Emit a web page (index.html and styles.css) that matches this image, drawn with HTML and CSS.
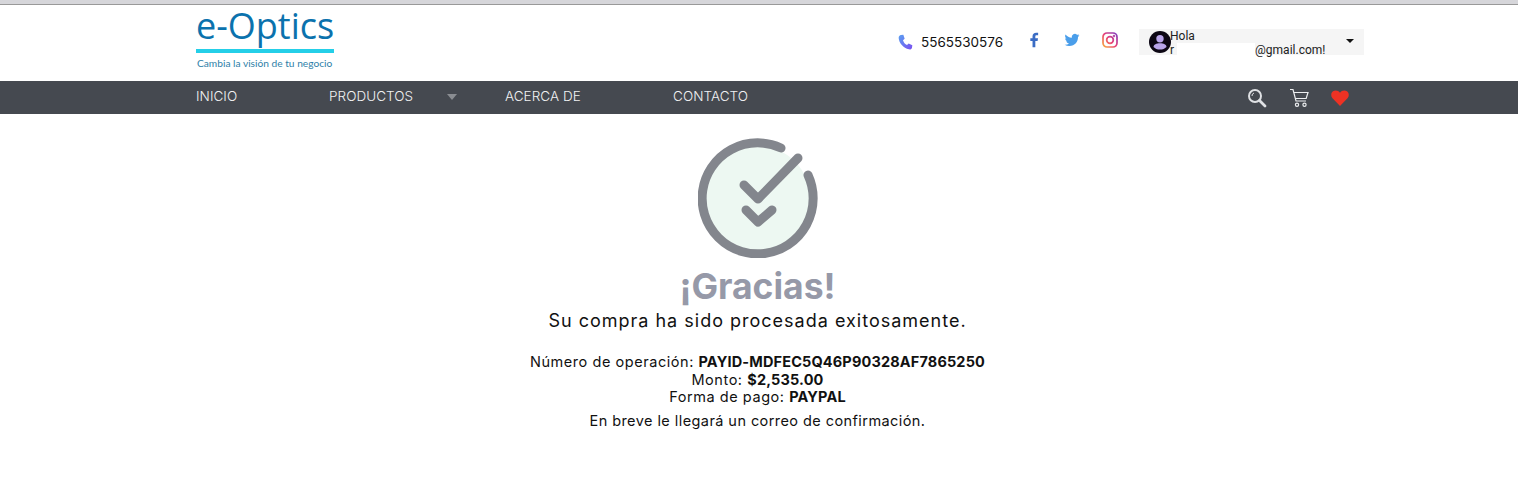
FILE: index.html
```html
<!DOCTYPE html>
<html lang="es">
<head>
  <meta charset="utf-8">
  <title>e-Optics</title>
  <link rel="stylesheet" href="styles.css">
</head>
<body>
  <div class="browser-edge"></div>

  <header class="top">
    <div class="logo">
      <div class="logo-name">e-Optics</div>
      <div class="logo-rule"></div>
      <div class="logo-tag">Cambia la visión de tu negocio</div>
    </div>
    <div class="top-right">
      <svg class="phone" width="16" height="16" viewBox="0 0 24 24">
        <defs>
          <linearGradient id="phone-grad" x1="0" y1="0" x2="1" y2="1">
            <stop offset="0" stop-color="#5aa0f0"/>
            <stop offset="1" stop-color="#7a4ff0"/>
          </linearGradient>
        </defs>
        <path fill="url(#phone-grad)" d="M6 1.5 L9.5 1 L11.5 7 L9 9.2 C10 12.5 12 15 15 16.5 L17.5 14.2 L23 17 L22.5 20.5 C22 22.5 20 23.5 18 23 C9.5 21 3 13.5 2.5 6 C2.5 3.5 4 2 6 1.5 Z"/>
      </svg>
      <span class="phone-num">5565530576</span>
      <a class="social social-fb">
        <svg width="16" height="16" viewBox="0 0 24 24"><path fill="#3a6cc4" d="M14 23V13.5h3.4l.6-4H14V7c0-1.200.5-2 2-2h2.200V1.300C17.500 1.100 16.300 1 15.300 1 12 1 9.800 3 9.800 6.500v3H6.500v4h3.300V23z"/></svg>
      </a>
      <a class="social social-tw">
        <svg width="16" height="16" viewBox="0 0 24 24"><path fill="#4a9eea" d="M23 5c-.8.4-1.700.6-2.600.8 1-.6 1.700-1.500 2-2.600-.9.500-1.900.9-2.900 1.100A4.600 4.600 0 0 0 11.700 8.500C7.900 8.300 4.500 6.500 2.300 3.700c-1.200 2.100-.6 4.700 1.400 6.100-.7 0-1.400-.2-2-.6 0 2.200 1.500 4.200 3.700 4.600-.7.200-1.400.2-2.100.1.600 1.900 2.300 3.200 4.300 3.200A9.300 9.300 0 0 1 1 19c2.100 1.300 4.500 2 7 2 8.500 0 13.300-7.200 13-13.600.9-.6 1.500-1.400 2-2.400z"/></svg>
      </a>
      <a class="social social-ig">
        <svg width="16" height="16" viewBox="0 0 24 24" fill="none" stroke="url(#ig-grad)" stroke-width="2.600">
          <defs>
            <linearGradient id="ig-grad" gradientUnits="userSpaceOnUse" x1="1" y1="23" x2="23" y2="1">
              <stop offset="0" stop-color="#f9b13c"/>
              <stop offset="0.5" stop-color="#e8407a"/>
              <stop offset="1" stop-color="#7a3fc4"/>
            </linearGradient>
          </defs>
          <rect x="1.500" y="1.500" width="21" height="21" rx="6"/>
          <circle cx="12" cy="12" r="5"/>
          <circle cx="18" cy="6" r=".6"/>
        </svg>
      </a>
      <div class="user-box">
        <svg class="avatar" width="22" height="22" viewBox="0 0 22 22">
          <circle cx="11" cy="11" r="11" fill="#0c0714"/>
          <circle cx="11" cy="7.800" r="3.700" fill="#b9a5ea"/>
          <path fill="#b9a5ea" d="M4.500 16c0-2.600 3-3.800 6.500-3.800s6.500 1.200 6.500 3.800c-1.500 1.600-3.900 2.600-6.500 2.600s-5-1-6.500-2.600z"/>
        </svg>
        <div class="user-text">
          <div>Hola</div>
          <div class="user-mail">r<span class="redact"></span>@gmail.com!</div>
        </div>
        <span class="caret"></span>
      </div>
    </div>
  </header>

  <nav class="menu">
    <div class="menu-links">
      <a class="link-inicio">INICIO</a>
      <a class="link-productos">PRODUCTOS<span class="menu-arrow"></span></a>
      <a class="link-acerca">ACERCA DE</a>
      <a>CONTACTO</a>
    </div>
    <div class="menu-icons">
      <svg width="20" height="20" viewBox="0 0 20 20" fill="none" stroke="#dfe1e4">
        <circle cx="8" cy="8" r="6" stroke-width="2"/>
        <path d="M5 8a3 3 0 0 1 2-3" stroke-width="1"/>
        <path d="M12.500 12.500 L18 18" stroke-width="2.800" stroke-linecap="round"/>
      </svg>
      <svg width="20" height="20" viewBox="0 0 20 20" fill="none" stroke="#eceef0" stroke-width="1.200">
        <path d="M1 1.500h3l3 11.500h10"/>
        <path d="M4.700 4.500H19l-1.800 6H6.300"/>
        <circle cx="8" cy="16.800" r="1.600"/>
        <circle cx="15.500" cy="16.800" r="1.600"/>
      </svg>
      <svg width="18" height="16" viewBox="0 0 18 16">
        <path fill="#ee3224" d="M9 16 L1.500 8.300 C-.5 6 0 2.800 2 1.300 C4.200-.3 7.300.2 9 2.800 C10.700.2 13.800-.3 16 1.300 C18 2.800 18.500 6 16.500 8.300 Z"/>
      </svg>
    </div>
  </nav>

  <main class="thanks">
    <svg class="check" width="120" height="120" viewBox="0 0 120 120" fill="none" stroke="#83868d" stroke-linecap="round" stroke-linejoin="round">
      <circle cx="60" cy="60" r="52" fill="#edf8f2" stroke="none"/>
      <path d="M83 10 A55.500 55.500 0 1 0 110 37" stroke-width="9"/>
      <path d="M46 47 L60 61 L100 20" stroke-width="9"/>
      <path d="M48 72 L60 84 L74 72" stroke-width="9"/>
    </svg>
    <h1>¡Gracias!</h1>
    <p class="lead">Su compra ha sido procesada exitosamente.</p>
    <div class="details">
      <div>Número de operación: <b>PAYID-MDFEC5Q46P90328AF7865250</b></div>
      <div>Monto: <b>$2,535.00</b></div>
      <div>Forma de pago: <b>PAYPAL</b></div>
    </div>
    <p class="note">En breve le llegará un correo de confirmación.</p>
  </main>
</body>
</html>
```

FILE: styles.css
```css
body {
  margin: 0;
  background-color: #fff;
  font-family: Inter, "Open Sans", sans-serif;
  color: #111;
}

.browser-edge {
  height: 4px;
  background-color: #d6d6da;
  border-bottom: 1px solid #999;
}

.top {
  height: 76px;
  box-sizing: border-box;
  padding: 0 154px 0 196px;
  display: flex;
  justify-content: space-between;
  align-items: flex-start;
}

.logo {
  width: 138px;
}

.logo-name {
  font-family: "Open Sans", sans-serif;
  font-size: 36px;
  font-weight: 500;
  line-height: 40px;
  margin-top: 1px;
  color: #0b72ad;
  white-space: nowrap;
}

.logo-rule {
  height: 4px;
  margin-top: 3px;
  background-color: #24cfe8;
}

.logo-tag {
  font-family: Lato, sans-serif;
  font-size: 10.200px;
  line-height: 12px;
  margin-top: 4px;
  margin-left: 1px;
  color: #2f7fa8;
  white-space: nowrap;
}

.top-right {
  display: flex;
  align-items: center;
  margin-top: 24px;
}

.phone {
  margin-right: 8px;
}

.phone-num {
  font-size: 13.500px;
  color: #111;
  width: 81px;
}

.social {
  width: 16px;
  height: 16px;
  display: block;
  margin-left: 22px;
  margin-top: -4px;
}

.social-fb {
  margin-left: 24px;
}

.user-box {
  width: 225px;
  height: 26px;
  margin-left: 21px;
  box-sizing: border-box;
  padding-left: 10px;
  background-color: #f5f5f5;
  display: flex;
  align-items: center;
  font-family: Roboto, sans-serif;
  font-size: 12px;
  line-height: 14px;
  color: #222;
}

.avatar {
  flex: none;
}

.user-text {
  margin-left: -1px;
  margin-top: 1px;
  width: 171px;
  position: relative;
  z-index: 1;
}

.user-mail {
  display: flex;
}

.redact {
  width: 78px;
  height: 12px;
  margin-left: 3px;
  background-color: #fff;
}

.caret {
  width: 0;
  height: 0;
  margin-left: 5px;
  margin-top: -3px;
  border-left: 4px solid transparent;
  border-right: 4px solid transparent;
  border-top: 4px solid #111;
}

.menu {
  height: 33px;
  padding: 0 169px 0 196px;
  background-color: #454950;
  display: flex;
  justify-content: space-between;
  align-items: center;
}

.menu-links {
  display: flex;
  font-size: 13.500px;
  font-weight: 300;
  letter-spacing: 0.05px;
  color: #f1f2f3;
  margin-top: -3px;
}

.link-inicio {
  width: 133px;
}

.link-productos {
  width: 176px;
  display: flex;
  align-items: center;
}

.link-acerca {
  width: 168px;
}

.menu-arrow {
  width: 0;
  height: 0;
  margin-left: 34px;
  margin-top: 2px;
  border-left: 5px solid transparent;
  border-right: 5px solid transparent;
  border-top: 6px solid #8a8d92;
}

.menu-icons {
  display: flex;
  align-items: center;
  gap: 22px;
  margin-top: 1px;
}

.thanks {
  display: flex;
  flex-direction: column;
  align-items: center;
  text-align: center;
  padding: 24px 3px 0 0;
}

.check {
  display: block;
}

h1 {
  margin: 9px 0 0;
  font-size: 35.500px;
  line-height: 40px;
  font-weight: 700;
  color: #9699a8;
}

.lead {
  margin: 1px 0 0;
  font-size: 18px;
  line-height: 26px;
  letter-spacing: 1px;
}

.details {
  margin-top: 19px;
  font-size: 14.500px;
  line-height: 17.500px;
  letter-spacing: 0.55px;
}

.details b {
  letter-spacing: 0.15px;
}

.note {
  margin: 6px 0 0;
  font-size: 14.500px;
  line-height: 18px;
  letter-spacing: 0.43px;
}
```
